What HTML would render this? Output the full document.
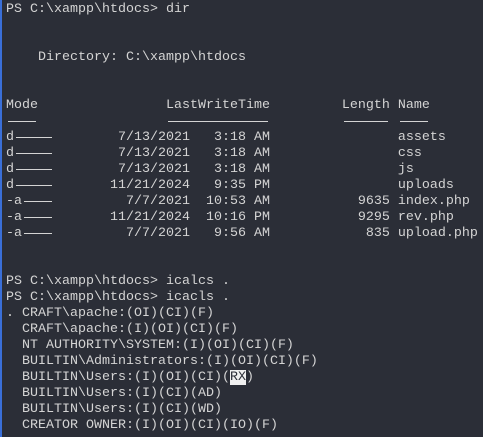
<!DOCTYPE html>
<html><head><style>
html,body{margin:0;padding:0;}
body{width:483px;height:437px;background:#2b2e37;overflow:hidden;position:relative;}
.bar{position:absolute;left:0;top:0;width:2px;height:437px;background:#3a6fd8;}
pre{position:absolute;left:6px;top:2px;margin:0;font-family:"Liberation Mono",monospace;font-size:13.33px;line-height:16px;color:#d4d4d4;}
.l{position:absolute;height:1px;background:#d4d4d4;}
.hl{background:#f0f0f0;color:#2b2e37;}
</style></head><body><div class="bar"></div><pre>PS C:\xampp\htdocs&gt; dir


    Directory: C:\xampp\htdocs


Mode                LastWriteTime         Length Name

d             7/13/2021   3:18 AM                assets
d             7/13/2021   3:18 AM                css
d             7/13/2021   3:18 AM                js
d            11/21/2024   9:35 PM                uploads
-a             7/7/2021  10:53 AM           9635 index.php
-a           11/21/2024  10:16 PM           9295 rev.php
-a             7/7/2021   9:56 AM            835 upload.php


PS C:\xampp\htdocs&gt; icalcs .
PS C:\xampp\htdocs&gt; icacls .
. CRAFT\apache:(OI)(CI)(F)
  CRAFT\apache:(I)(OI)(CI)(F)
  NT AUTHORITY\SYSTEM:(I)(OI)(CI)(F)
  BUILTIN\Administrators:(I)(OI)(CI)(F)
  BUILTIN\Users:(I)(OI)(CI)(<span class="hl">RX</span>)
  BUILTIN\Users:(I)(CI)(AD)
  BUILTIN\Users:(I)(CI)(WD)
  CREATOR OWNER:(I)(OI)(CI)(IO)(F)</pre>
<div class="l" style="left:8px;width:28px;top:121px"></div>
<div class="l" style="left:168px;width:100px;top:121px"></div>
<div class="l" style="left:344px;width:44px;top:121px"></div>
<div class="l" style="left:400px;width:28px;top:121px"></div>
<div class="l" style="left:16px;width:36px;top:137px"></div>
<div class="l" style="left:16px;width:36px;top:153px"></div>
<div class="l" style="left:16px;width:36px;top:169px"></div>
<div class="l" style="left:16px;width:36px;top:185px"></div>
<div class="l" style="left:24px;width:28px;top:201px"></div>
<div class="l" style="left:24px;width:28px;top:217px"></div>
<div class="l" style="left:24px;width:28px;top:233px"></div>
</body></html>
